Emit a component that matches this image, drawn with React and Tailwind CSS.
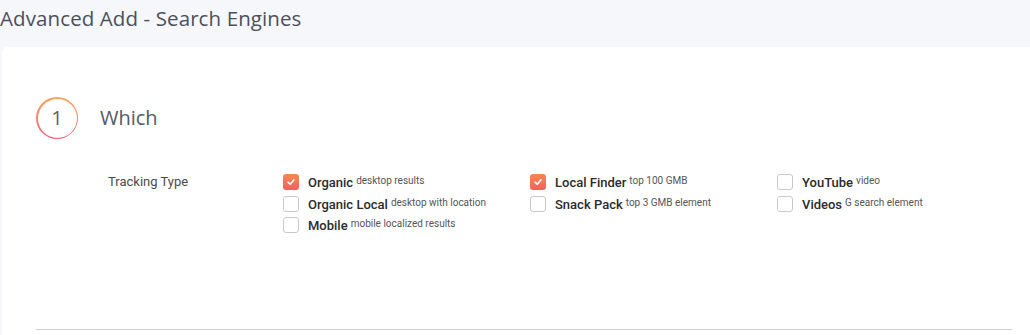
import React from 'react';

const columns = [
  [
    { label: 'Organic', desc: 'desktop results', checked: true },
    { label: 'Organic Local', desc: 'desktop with location' },
    { label: 'Mobile', desc: 'mobile localized results' },
  ],
  [
    { label: 'Local Finder', desc: 'top 100 GMB', checked: true },
    { label: 'Snack Pack', desc: 'top 3 GMB element' },
  ],
  [
    { label: 'YouTube', desc: 'video' },
    { label: 'Videos', desc: 'G search element' },
  ],
];

const Check = ({ checked }) =>
  checked ? (
    <span className="w-4 h-4 rounded-[3px] bg-gradient-to-b from-[#f7874f] to-[#f0625c] flex items-center justify-center shrink-0">
      <svg width="10" height="10" viewBox="0 0 10 10" fill="none">
        <path d="M2 5.2 L4.2 7.2 L8 2.8" stroke="white" strokeWidth="1.6" strokeLinecap="round" strokeLinejoin="round" />
      </svg>
    </span>
  ) : (
    <span className="w-4 h-4 rounded-[3px] border border-[#c9c9cc] bg-white shrink-0" />
  );

const App = () => {
  return (
    <div className="w-[1030px] h-[335px] overflow-hidden bg-[#f6f7fa]" style={{ fontFamily: 'Roboto, sans-serif' }}>
      <h1 className="pt-[5px] text-[20.5px] leading-[26px] text-[#4b505c] tracking-[0.1px]" style={{ fontFamily: '"Open Sans", sans-serif' }}>
        Advanced Add - Search Engines
      </h1>
      <div className="mt-[16px] ml-[2px] w-[1040px] h-[300px] bg-white rounded-[6px] pt-[50px]">
        <div className="flex items-center pl-[34px]">
          <div className="w-[42px] h-[42px] rounded-full bg-gradient-to-b from-[#f8a65a] to-[#ec5b7c] p-[1.5px]">
            <div className="w-full h-full rounded-full bg-white flex items-center justify-center text-[20px] text-[#5d626c]" style={{ fontFamily: '"Open Sans", sans-serif' }}>
              1
            </div>
          </div>
          <div className="ml-[22px] text-[20px] text-[#555a64]" style={{ fontFamily: '"Open Sans", sans-serif' }}>
            Which
          </div>
        </div>
        <div className="flex mt-[35px]">
          <div className="w-[281px] pl-[106px] text-[13px] text-[#4a4a4a] leading-[16px]">Tracking Type</div>
          {columns.map((col, ci) => (
            <div key={ci} className="w-[247px] flex flex-col gap-[5.5px]">
              {col.map((item) => (
                <div key={item.label} className="flex items-center h-4">
                  <Check checked={item.checked} />
                  <span className="ml-[9px] text-[13px] font-medium text-[#2b2b2b] leading-4 mt-[2px]">{item.label}</span>
                  <span className="ml-[3px] text-[10px] text-[#555] leading-4 -mt-[2px]">{item.desc}</span>
                </div>
              ))}
            </div>
          ))}
        </div>
        <div className="mt-[96px] ml-[34px] w-[976px] h-[1px] bg-[#cfd0d4]" />
      </div>
    </div>
  );
};

export default App;
